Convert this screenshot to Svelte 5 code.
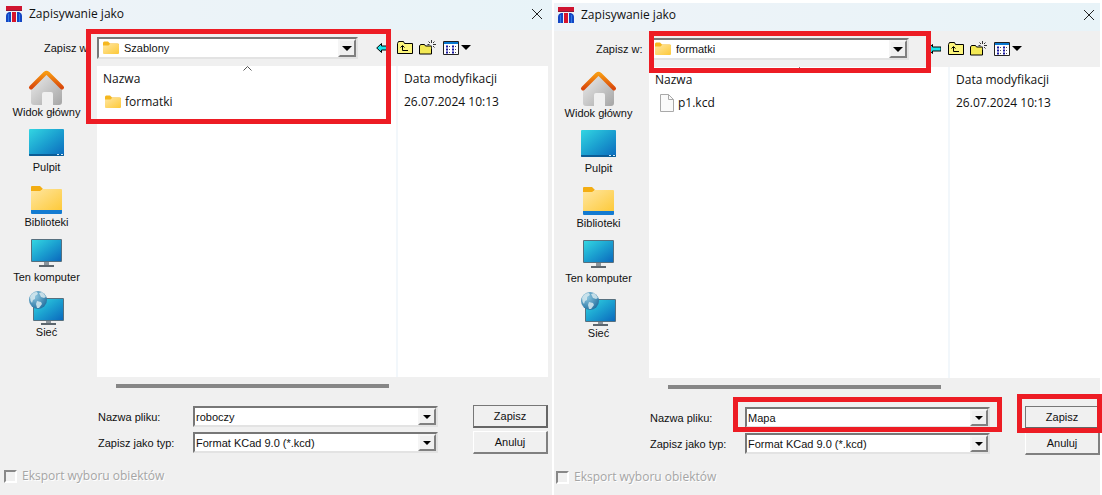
<script>
    const places = [
        { id: 'home', label: 'Widok główny' },
        { id: 'desktop', label: 'Pulpit' },
        { id: 'library', label: 'Biblioteki' },
        { id: 'computer', label: 'Ten komputer' },
        { id: 'network', label: 'Sieć' }
    ];

    const dialogs = [
        {
            id: 'first',
            folder: 'Szablony',
            fileName: 'roboczy',
            files: [{ name: 'formatki', type: 'folder', date: '26.07.2024 10:13' }],
            marks: ['files']
        },
        {
            id: 'second',
            folder: 'formatki',
            fileName: 'Mapa',
            files: [{ name: 'p1.kcd', type: 'file', date: '26.07.2024 10:13' }],
            marks: ['folder', 'name', 'save']
        }
    ];
</script>

{#snippet folderIcon()}
    <svg class="folder-icon" width="16" height="16" viewBox="0 0 16 16" aria-hidden="true">
        <path d="M0 3Q0 1.500 1.300 1.500H5l2 2h7.500Q16 3.500 16 4.800V8H0z" fill="#f5b71f" />
        <path d="M0 5.500h5.500L7 4h8Q16 4 16 5V13q0 1-1 1H1q-1 0-1-1z" fill="url(#folder-fill)" />
    </svg>
{/snippet}

{#snippet placeIcon(id)}
    <svg width="40" height="40" viewBox="0 0 40 40" aria-hidden="true">
        {#if id === 'home'}
            <path d="M4 21L19.500 8 35 21v15q0 3-3 3h-6V28q0-2-2-2h-7q-2 0-2 2v11H7q-3 0-3-3z" fill="url(#wall-fill)" />
            <path d="M4 21.500L18 7.500q1.500-1.300 3 0L35 21.500" fill="none" stroke="url(#roof-fill)" stroke-width="4" stroke-linecap="round" stroke-linejoin="round" />
        {:else if id === 'desktop'}
            <rect x="2" y="8" width="35" height="27" rx="1" fill="url(#screen-fill)" />
            <path d="M2 33h35v1q0 1-1 1H3q-1 0-1-1z" fill="#0b5c96" />
            <path d="M30 33.500h2M34 33.500h2" stroke="#d5edfa" />
        {:else if id === 'library'}
            <path d="M4 11q0-1 1-1h8l3 3-3 3H4z" fill="#f3ad12" />
            <path d="M4 15h9l3-2h18q1 0 1 1v21H4z" fill="url(#folder-fill)" />
            <path d="M4 34h31v3q0 1-1 1H5q-1 0-1-1z" fill="#147bd1" />
        {:else if id === 'computer'}
            <path d="M17 30h5v5h-5z" fill="#8b949b" />
            <rect x="12" y="34" width="15" height="2" fill="#5c666e" />
            <rect x="4" y="8" width="31" height="23" rx="1" fill="#56707f" />
            <rect x="5" y="9" width="29" height="21" fill="url(#screen-fill)" />
        {:else}
            <path d="M19 34h5v4h-5z" fill="#8b949b" />
            <rect x="14" y="37" width="15" height="2" fill="#5c666e" />
            <rect x="6" y="12" width="31" height="23" rx="1" fill="#56707f" />
            <rect x="7" y="13" width="29" height="21" fill="url(#screen-fill)" />
            <circle cx="11" cy="14" r="9" fill="url(#globe-fill)" />
            <path d="M3 11q2-5 7-5l1 2-3 2v3l-2 1-1 3q-2-2-2-6zM12 7l3-1q3 2 4 5l-2 1-3-1zM10 15l4 1 1 2-3 4h-2l-1-4z" fill="#d7e9ef" opacity=".85" />
        {/if}
    </svg>
{/snippet}

<svg class="defs" width="0" height="0" aria-hidden="true">
    <defs>
        <linearGradient id="folder-fill" x1="0" y1="0" x2="1" y2="1">
            <stop offset="0" stop-color="#ffe6a0" />
            <stop offset="1" stop-color="#fdc938" />
        </linearGradient>
        <linearGradient id="screen-fill" x1="0" y1="0" x2="1" y2="1">
            <stop offset="0" stop-color="#33d6e2" />
            <stop offset=".5" stop-color="#1ba0d0" />
            <stop offset="1" stop-color="#0b69bd" />
        </linearGradient>
        <linearGradient id="wall-fill" x1="0" y1="0" x2="1" y2="1">
            <stop offset="0" stop-color="#ededed" />
            <stop offset="1" stop-color="#a5a5a5" />
        </linearGradient>
        <linearGradient id="roof-fill" x1="0" y1="0" x2="0" y2="1">
            <stop offset="0" stop-color="#f79a12" />
            <stop offset="1" stop-color="#d9480b" />
        </linearGradient>
        <radialGradient id="globe-fill" cx=".35" cy=".3" r=".8">
            <stop offset="0" stop-color="#8cc5de" />
            <stop offset="1" stop-color="#1c6b9c" />
        </radialGradient>
    </defs>
</svg>

<main class="screens">
    {#each dialogs as dialog (dialog.id)}
        <section class="dialog {dialog.id}">
            <header class="titlebar">
                <svg width="16" height="16" viewBox="0 0 16 16" aria-hidden="true">
                    <path d="M0 0h16v4.500H0z" fill="#cf1430" />
                    <path d="M0 4h16v1H0z" fill="#8b1738" />
                    <path d="M6 6h4v10H6z" fill="#d6142c" />
                    <path d="M5 6v10H0V10q0-3 3-4zM11 6v10h5V10q0-3-3-4z" fill="#1346c4" />
                    <path d="M2.500 8v8M13.500 8v8" stroke="#2c78e6" />
                </svg>
                <h1>Zapisywanie jako</h1>
                <button class="close" aria-label="Zamknij">
                    <svg width="10" height="10" viewBox="0 0 10 10"><path d="M0 0l10 10M10 0L0 10" stroke="#222" /></svg>
                </button>
            </header>

            <div class="lookin">
                <label for="{dialog.id}-folder">Zapisz w:</label>
                <div class="combo tall">
                    {@render folderIcon()}
                    <select id="{dialog.id}-folder"><option>{dialog.folder}</option></select>
                    <span class="arrow"></span>
                </div>
                <div class="tools">
                    <button aria-label="Wstecz">
                        <svg width="14" height="12" viewBox="0 0 14 12"><path d="M.7 6l4.800-4.500V4H14v4H5.500v2.500z" fill="#18e4ec" stroke="#000" /></svg>
                    </button>
                    <button aria-label="W górę">
                        <svg width="16" height="14" viewBox="0 0 16 14">
                            <path d="M.5 12.500V2.500l1-2h5l1 2h8v10z" fill="#fbf47c" stroke="#000" />
                            <path d="M5.500 5v4.500H11M3.500 6.500l2-2 2 2" fill="none" stroke="#000" />
                        </svg>
                    </button>
                    <button aria-label="Nowy folder">
                        <svg width="17" height="16" viewBox="0 0 17 16">
                            <path d="M.5 14V6l1-1.500h4L6.500 6h6v8z" fill="#f3e955" stroke="#000" />
                            <path d="M12.500 0v3M12.500 6v3M8.500 4.500h2M14 4.500h3M9.500 1.500L11 3M14 6l1.500 1.500M15.500 1.500L14 3" stroke="#333" />
                        </svg>
                    </button>
                    <button aria-label="Widok">
                        <svg width="28" height="14" viewBox="0 0 28 14">
                            <path d="M.5.500h15v13H.5z" fill="#fff" stroke="#222" />
                            <path d="M1 1h14v2H1z" fill="#0878d0" />
                            <path d="M3 5.500h2M3 8.500h2M3 11.500h2M9 5.500h2M9 8.500h2M9 11.500h2" stroke="#1818a0" stroke-width="2" />
                            <path d="M6 5.500h1M6 8.500h1M6 11.500h1M12 5.500h1M12 8.500h1M12 11.500h1" stroke="#555" />
                            <path d="M18 4h10l-5 5z" fill="#000" />
                        </svg>
                    </button>
                </div>
            </div>

            <div class="browser">
                <nav class="places">
                    {#each places as place (place.id)}
                        <button class="place">
                            {@render placeIcon(place.id)}
                            <span>{place.label}</span>
                        </button>
                    {/each}
                </nav>
                <div class="listing">
                    <div class="list">
                        <svg class="sort" width="9" height="5" viewBox="0 0 9 5" aria-hidden="true"><path d="M.5 4.500l4-4 4 4" fill="none" stroke="#555" /></svg>
                        <table>
                            <thead>
                                <tr><th>Nazwa</th><th class="date">Data modyfikacji</th></tr>
                            </thead>
                            <tbody>
                                {#each dialog.files as file (file.name)}
                                    <tr>
                                        <td>
                                            <div class="file {file.type}">
                                                {#if file.type === 'folder'}
                                                    {@render folderIcon()}
                                                {:else}
                                                    <svg width="14" height="18" viewBox="0 0 14 18" aria-hidden="true">
                                                        <path d="M.5.500h8l5 5v12H.5z" fill="#fafafa" stroke="#a9a9a9" />
                                                        <path d="M8.500.500v5h5" fill="none" stroke="#a9a9a9" />
                                                    </svg>
                                                {/if}
                                                {file.name}
                                            </div>
                                        </td>
                                        <td class="date">{file.date}</td>
                                    </tr>
                                {/each}
                            </tbody>
                        </table>
                    </div>
                    <div class="scrollbar"></div>
                </div>
            </div>

            <div class="form">
                <label for="{dialog.id}-name">Nazwa pliku:</label>
                <div class="combo">
                    <input id="{dialog.id}-name" type="text" value={dialog.fileName} />
                    <button class="arrow" aria-label="Rozwiń"></button>
                </div>
                <button class="push default">Zapisz</button>
                <label for="{dialog.id}-type">Zapisz jako typ:</label>
                <div class="combo">
                    <select id="{dialog.id}-type"><option>Format KCad 9.0 (*.kcd)</option></select>
                    <span class="arrow"></span>
                </div>
                <button class="push">Anuluj</button>
            </div>

            <label class="export">
                <input type="checkbox" disabled />
                Eksport wyboru obiektów
            </label>

            {#each dialog.marks as mark (mark)}
                <div class="mark {mark}"></div>
            {/each}
        </section>
    {/each}
</main>

<style>
    :global(body) {
        background: #fff;
    }

    .defs {
        position: absolute;
    }

    .screens {
        display: grid;
        grid-template-columns: 552fr 550fr;
        font: 11px/14px "Liberation Sans", Arial, sans-serif;
        color: #111;
    }

    .dialog {
        position: relative;
        box-sizing: border-box;
        min-width: 0;
        padding: 0 4px 12px 0;
        background: #f0f0f0;
    }

    .dialog.second {
        margin: 3px 2px 0 2px;
        padding: 0 0 9px;
    }

    button {
        padding: 0;
        border: 0;
        background: none;
        font: inherit;
        color: inherit;
    }

    svg {
        display: block;
        flex: none;
    }

    .titlebar {
        display: flex;
        align-items: center;
        box-sizing: border-box;
        height: 30px;
        padding: 0 10px 3px 6px;
        margin-right: -4px;
        background: linear-gradient(90deg, #eef3f8, #e8f3f8);
    }

    .second .titlebar {
        height: 28px;
        margin-right: 0;
        padding: 0 6px 4px 4px;
    }

    h1 {
        flex: 1;
        margin: 0 0 0 7px;
        font: 12px/16px "Open Sans", "Noto Sans", sans-serif;
    }

    .lookin {
        display: flex;
        align-items: center;
        height: 22px;
        padding-top: 7px;
    }

    .lookin label {
        width: 53px;
        padding-left: 44px;
    }

    .second .lookin label {
        padding-left: 42px;
    }

    .combo {
        display: flex;
        align-items: center;
        box-sizing: border-box;
        height: 21px;
        min-width: 0;
        padding-left: 1px;
        background: #fff;
        border: 2px solid;
        border-color: #777 #e3e3e3 #e3e3e3 #777;
    }

    .combo.tall {
        flex: 1;
        height: 22px;
        padding-left: 4px;
    }

    .combo select,
    .combo input {
        flex: 1;
        min-width: 0;
        height: 16px;
        padding: 0;
        border: 0;
        outline: 0;
        appearance: none;
        background: none;
        font: inherit;
        color: inherit;
    }

    .combo.tall select {
        padding-left: 5px;
    }

    .arrow {
        display: flex;
        align-items: center;
        justify-content: center;
        align-self: stretch;
        box-sizing: border-box;
        width: 18px;
        background: #f0f0f0;
        border: 2px solid;
        border-color: #f5f5f5 #808080 #808080 #f5f5f5;
        pointer-events: none;
    }

    .arrow::after {
        content: '';
        border: 4px solid transparent;
        border-top-color: #000;
        border-bottom: 0;
    }

    .tall .arrow::after {
        border-width: 5px 5px 0;
    }

    .tools {
        display: flex;
        align-items: center;
        justify-content: space-between;
        width: 95px;
        margin: 0 77px 0 18px;
    }

    .second .tools {
        margin-right: 78px;
    }

    .browser {
        display: flex;
        margin-top: 7px;
    }

    .places {
        width: 93px;
        margin-right: 4px;
    }

    .second .places {
        width: 89px;
        margin-right: 6px;
    }

    .place {
        display: flex;
        flex-direction: column;
        align-items: center;
        justify-content: flex-start;
        width: 100%;
        height: 55px;
        line-height: 12px;
        white-space: nowrap;
    }

    .listing {
        flex: 1;
        min-width: 0;
    }

    .list {
        position: relative;
        height: 311px;
        background: linear-gradient(#f2f7fb, #f2f7fb) calc(100% - 150px) 0 / 2px 100% no-repeat #fff;
    }

    .sort {
        position: absolute;
        left: 146px;
        top: 0;
    }

    table {
        width: 100%;
        border-collapse: collapse;
        table-layout: fixed;
        font: 12px/16px "Open Sans", "Noto Sans", sans-serif;
    }

    th {
        height: 26px;
        padding: 0 0 0 6px;
        font-weight: 400;
        text-align: left;
    }

    td {
        height: 20px;
        padding: 0 0 0 8px;
    }

    th.date,
    td.date {
        width: 144px;
        padding: 0;
    }

    .file {
        display: flex;
        align-items: center;
        gap: 4px;
    }

    .file:not(.folder) {
        padding-left: 3px;
    }

    .scrollbar {
        height: 4px;
        margin: 7px 159px 0 19px;
        background: #868686;
    }

    .form {
        display: grid;
        grid-template-columns: 95px 1fr 75px;
        grid-auto-rows: 23px;
        row-gap: 3px;
        align-items: center;
        padding: 17px 0 0 98px;
    }

    .second .form {
        padding-left: 96px;
    }

    .form .combo {
        margin-right: 35px;
    }

    .push {
        box-sizing: border-box;
        height: 23px;
        background: #f0f0f0;
        border: solid;
        border-width: 1px 2px 2px 1px;
        border-color: #fff #808080 #808080 #fff;
    }

    .push.default {
        border-color: #777 #666 #666 #777;
    }

    .export {
        display: flex;
        align-items: center;
        gap: 5px;
        padding: 14px 0 0 4px;
        color: #a5a5a5;
        text-shadow: 1px 1px #fff;
        font: 12px/16px "Open Sans", "Noto Sans", sans-serif;
    }

    .second .export {
        padding-left: 2px;
    }

    .export input {
        appearance: none;
        box-sizing: border-box;
        width: 13px;
        height: 13px;
        margin: 0;
        border: 2px solid;
        border-color: #888 #fff #fff #888;
    }

    /* red frames drawn over the dialogs */
    .mark {
        position: absolute;
        box-sizing: border-box;
        border: 5px solid #ed1c24;
        pointer-events: none;
    }

    .mark.files {
        top: 29px;
        left: 86px;
        right: 161px;
        height: 95px;
    }

    .mark.folder {
        top: 28px;
        left: 95px;
        right: 169px;
        height: 42px;
    }

    .mark.name {
        top: 394px;
        left: 179px;
        right: 98px;
        height: 35px;
    }

    .mark.save {
        top: 391px;
        left: calc(100% - 83px);
        right: -2px;
        height: 39px;
    }
</style>
